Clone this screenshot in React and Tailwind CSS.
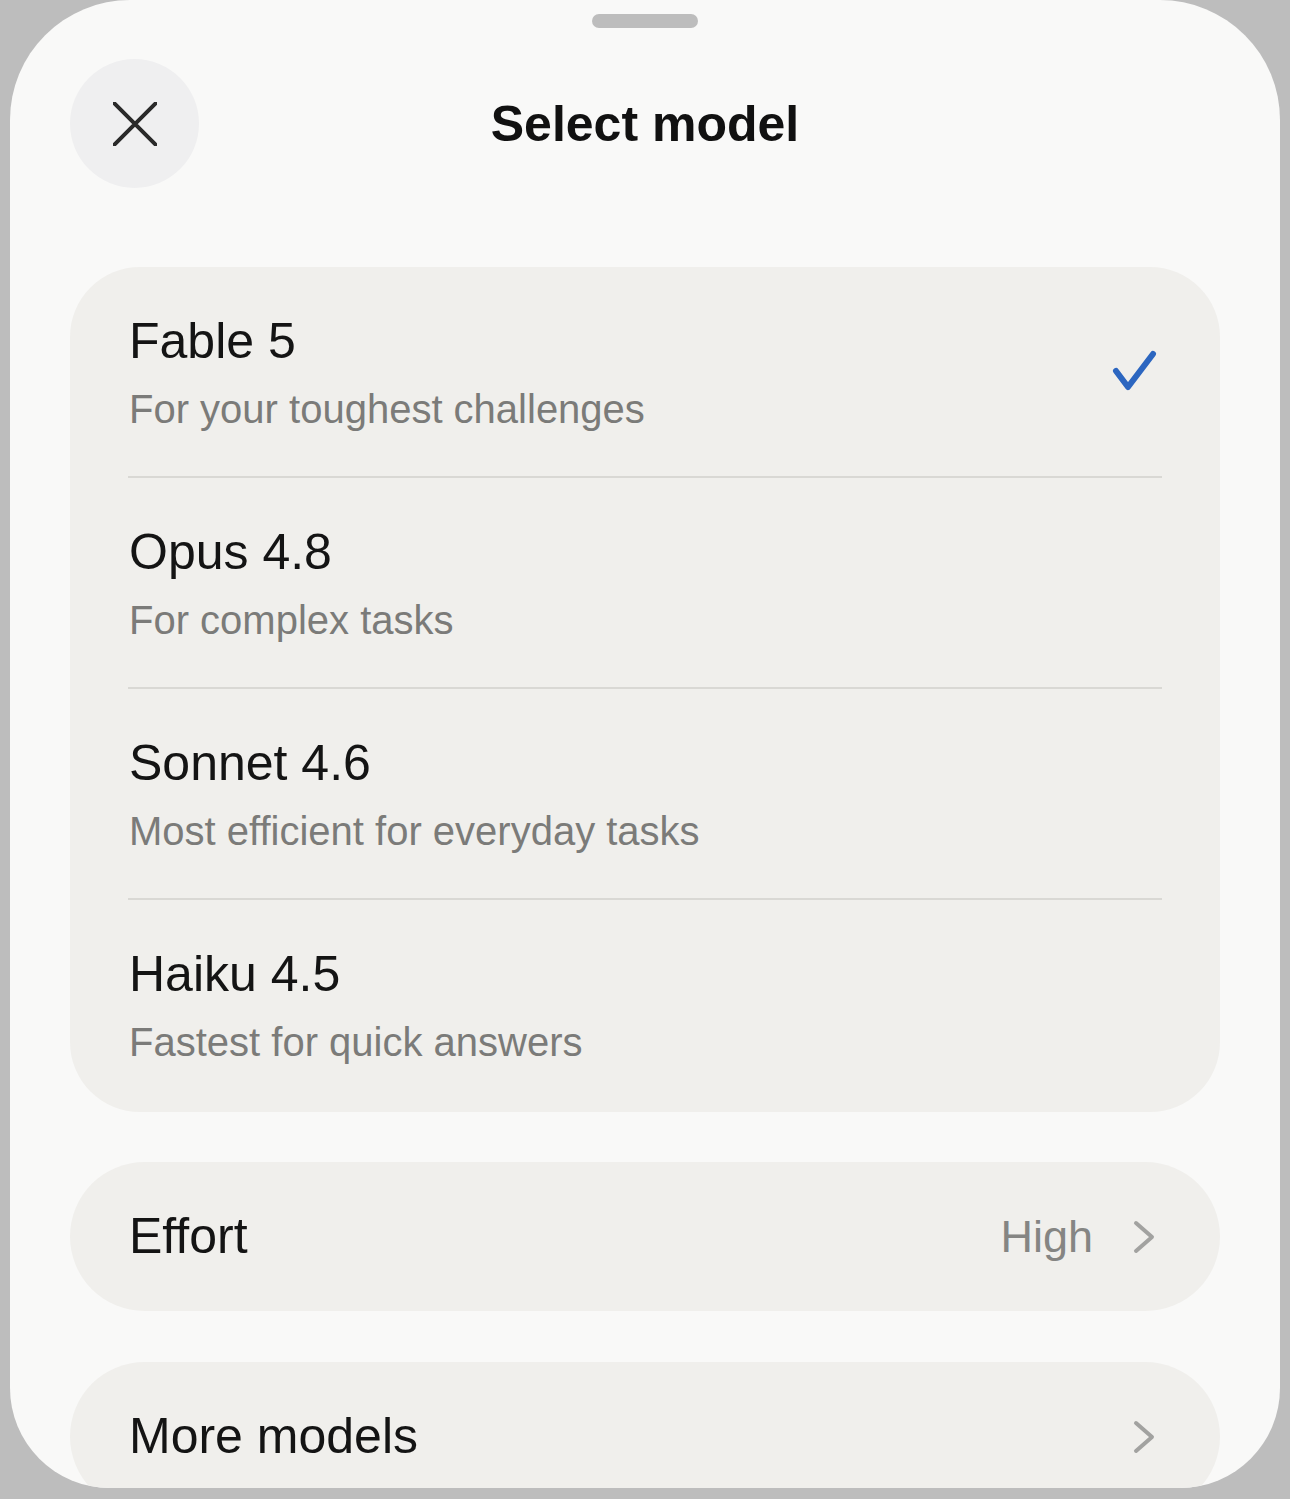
export default function App() {
  const models = [
    { name: "Fable 5", desc: "For your toughest challenges", selected: true },
    { name: "Opus 4.8", desc: "For complex tasks" },
    { name: "Sonnet 4.6", desc: "Most efficient for everyday tasks" },
    { name: "Haiku 4.5", desc: "Fastest for quick answers" },
  ];

  return (
    <div
      className="w-full h-[1499px] bg-[#bdbdbd] px-[10px] pb-[11px]"
      style={{ fontFamily: '"Liberation Sans", Arial, sans-serif' }}
    >
      <div className="h-[1488px] bg-[#f9f9f8] rounded-t-[120px] rounded-b-[100px] overflow-hidden flex flex-col px-[60px]">
        {/* Drag handle */}
        <div className="shrink-0 mt-[14px] mx-auto w-[106px] h-[14px] rounded-full bg-[#bdbdbd]" />

        {/* Header */}
        <div className="shrink-0 mt-[31px] grid grid-cols-[1fr_auto_1fr] items-center h-[129px]">
          <button className="w-[129px] h-[129px] rounded-full bg-[#efeff0] flex items-center justify-center">
            <svg width="44" height="44" viewBox="0 0 44 44" fill="none">
              <path d="M1 1L43 43M43 1L1 43" stroke="#2a2a2a" strokeWidth="4" strokeLinecap="round" />
            </svg>
          </button>
          <h1 className="text-[50px] leading-[60px] font-bold text-[#111]">Select model</h1>
          <div />
        </div>

        {/* Model list */}
        <div className="shrink-0 mt-[79px] rounded-[70px] bg-[#f0efec] pl-[58px] pr-[58px] pb-[3px]">
          {models.map((m, i) => (
            <div
              key={m.name}
              className={
                "flex items-center justify-between pt-[44px] pb-[43px] " +
                (i < models.length - 1 ? "border-b-2 border-[#d9d8d4]" : "")
              }
            >
              <div className="pl-[1px]">
                <div className="text-[50px] leading-[60px] text-[#141414]">{m.name}</div>
                <div className="mt-[14px] text-[40px] leading-[48px] text-[#7b7b79]">{m.desc}</div>
              </div>
              {m.selected && (
                <svg width="48" height="46" viewBox="0 0 48 46" fill="none" className="mr-[3px]">
                  <path d="M5 22L17 38L42 5" stroke="#2c66c0" strokeWidth="6" strokeLinecap="round" strokeLinejoin="round" />
                </svg>
              )}
            </div>
          ))}
        </div>

        {/* Effort */}
        <div className="mt-[50px] h-[149px] shrink-0 rounded-full bg-[#f0efec] flex items-center justify-between pl-[59px] pr-[65px]">
          <span className="text-[50px] text-[#141414]">Effort</span>
          <div className="flex items-center gap-[40px]">
            <span className="text-[45px] text-[#858583]">High</span>
            <Chevron />
          </div>
        </div>

        {/* More models */}
        <div className="mt-[51px] h-[149px] shrink-0 rounded-full bg-[#f0efec] flex items-center justify-between pl-[59px] pr-[65px]">
          <span className="text-[50px] text-[#141414]">More models</span>
          <Chevron />
        </div>
      </div>
    </div>
  );
}

function Chevron() {
  return (
    <svg width="22" height="34" viewBox="0 0 22 34" fill="none">
      <path d="M3 3L19 17L3 31" stroke="#a2a2a0" strokeWidth="4" strokeLinecap="round" strokeLinejoin="round" />
    </svg>
  );
}
